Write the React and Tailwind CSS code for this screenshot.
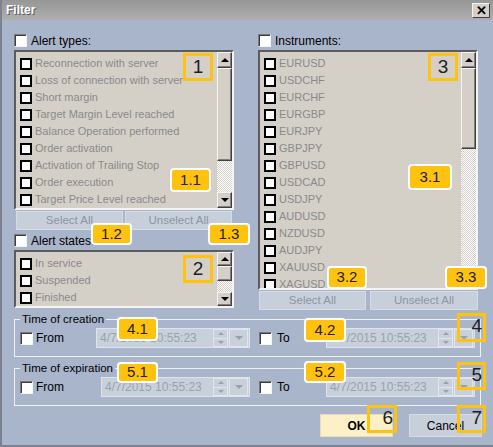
import React from "react";

const alertTypes = [
  "Reconnection with server",
  "Loss of connection with server",
  "Short margin",
  "Target Margin Level reached",
  "Balance Operation performed",
  "Order activation",
  "Activation of Trailing Stop",
  "Order execution",
  "Target Price Level reached",
];
const states = ["In service", "Suspended", "Finished"];
const instruments = [
  "EURUSD", "USDCHF", "EURCHF", "EURGBP", "EURJPY", "GBPJPY", "GBPUSD",
  "USDCAD", "USDJPY", "AUDUSD", "NZDUSD", "AUDJPY", "XAUUSD", "XAGUSD",
];

function Check3D() {
  return (
    <span className="block w-[13px] h-[13px] shrink-0 bg-white border border-t-[#7a7a7a] border-l-[#7a7a7a] border-r-[#f4f4f4] border-b-[#f4f4f4] shadow-[inset_1px_1px_0_#3c3c3c]" />
  );
}

function ListCheck() {
  return <span className="block w-[12px] h-[12px] shrink-0 border-2 border-black bg-white" />;
}

function Arrow({ down, h }) {
  return (
    <div className={`${h} w-full shrink-0 bg-[#d4d0c8] border border-t-[#f4f4f4] border-l-[#f4f4f4] border-r-[#404040] border-b-[#404040] shadow-[inset_-1px_-1px_0_#808080] flex items-center justify-center`}>
      {down ? (
        <span className="w-0 h-0 border-l-[4px] border-r-[4px] border-t-[4px] border-l-transparent border-r-transparent border-t-black" />
      ) : (
        <span className="w-0 h-0 border-l-[4px] border-r-[4px] border-b-[4px] border-l-transparent border-r-transparent border-b-black" />
      )}
    </div>
  );
}

function Scrollbar({ thumb, arrowH, down = true }) {
  return (
    <div className="w-[15px] h-full flex flex-col shrink-0">
      <Arrow h={arrowH} />
      <div className={`${thumb} shrink-0 bg-[#d4d0c8] border border-t-[#f4f4f4] border-l-[#f4f4f4] border-r-[#404040] border-b-[#404040] shadow-[inset_-1px_-1px_0_#808080]`} />
      <div className="flex-1 bg-[repeating-conic-gradient(#ffffff_0_25%,#d4d0c8_0_50%)] bg-[length:2px_2px]" />
      {down && <Arrow h={arrowH} down />}
    </div>
  );
}

function ListBox({ items, h, thumb, arrowH, down }) {
  return (
    <div className={`${h} flex bg-[#d4d0c8] border-2 border-t-[#5c5c5c] border-l-[#5c5c5c] border-r-[#f4f4f4] border-b-[#f4f4f4] overflow-hidden`}>
      <div className="flex-1 pt-[3px] pl-[4px] overflow-hidden">
        {items.map((t) => (
          <div key={t} className="h-[17px] flex items-center gap-[3px] text-[11px] text-[#8a8a8a] whitespace-nowrap">
            <ListCheck />
            <span>{t}</span>
          </div>
        ))}
      </div>
      <Scrollbar thumb={thumb} arrowH={arrowH} down={down} />
    </div>
  );
}

function FlatButton({ label, w }) {
  return (
    <div className={`${w} h-[19px] flex items-center justify-center bg-[#c7cfdb] border border-[#d6dce5] text-[11.5px] text-[#8c95a3]`}>
      {label}
    </div>
  );
}

function CheckLabel({ label }) {
  return (
    <div className="h-[13px] flex items-center gap-[4px] text-[12px] text-black">
      <Check3D />
      <span className="leading-none">{label}</span>
    </div>
  );
}

function Spin() {
  return (
    <div className="w-[15px] h-[18px] flex flex-col shrink-0 border border-[#e2e6ec]">
      <div className="flex-1 flex items-center justify-center border-b border-[#e2e6ec]">
        <span className="w-0 h-0 border-l-[3px] border-r-[3px] border-b-[3px] border-l-transparent border-r-transparent border-b-[#98a0ac]" />
      </div>
      <div className="flex-1 flex items-center justify-center">
        <span className="w-0 h-0 border-l-[3px] border-r-[3px] border-t-[3px] border-l-transparent border-r-transparent border-t-[#98a0ac]" />
      </div>
    </div>
  );
}

function Drop() {
  return (
    <div className="w-[19px] h-[18px] shrink-0 ml-[1px] flex items-center justify-center border border-[#e2e6ec]">
      <span className="w-0 h-0 border-l-[4px] border-r-[4px] border-t-[4px] border-l-transparent border-r-transparent border-t-[#98a0ac]" />
    </div>
  );
}

function DateField({ w }) {
  return (
    <div className={`${w} h-[20px] shrink-0 flex items-center bg-[#c8d0dc] border border-[#dfe4eb] pr-[1px]`}>
      <span className="flex-1 pl-[3px] text-[12px] text-[#9aa2ae] whitespace-nowrap">4/7/2015 10:55:23</span>
      <Spin />
      <Drop />
    </div>
  );
}

function Group({ title, leftW, leftDate }) {
  return (
    <fieldset className="ml-[14px] w-[467px] border border-[#eef1f6] shadow-[0_0_0_0_transparent] pb-[8px]">
      <legend className="ml-[5px] px-[2px] text-[11.5px] text-black leading-[14px]">{title}</legend>
      <div className="flex items-center mt-[2px] pl-[5px]">
        <div className={`${leftW} shrink-0 flex items-center gap-[3px] text-[12px]`}>
          <Check3D />
          <span className="leading-none">From</span>
        </div>
        <DateField w={leftDate} />
        <div className="w-[67px] ml-[9px] shrink-0 flex items-center gap-[5px] text-[12px]">
          <Check3D />
          <span className="leading-none">To</span>
        </div>
        <DateField w="w-[149px]" />
      </div>
    </fieldset>
  );
}

function Outline({ n, cls, end }) {
  return (
    <div className={`absolute ${cls} border-[3px] border-[#ffc20e] flex ${end ? "justify-end items-start pr-[1px]" : "justify-center items-center"} text-[19px] leading-[20px] text-[#1e1e1e]`}>
      {n}
    </div>
  );
}

function Badge({ n, cls }) {
  return (
    <div className={`absolute ${cls} bg-[#ffc20e] rounded-[4px] border-2 border-[#fdfdfd] shadow-[0_0_1px_#c8c8c8] flex items-center justify-center text-[15px] text-[#222]`}>
      {n}
    </div>
  );
}

export default function App() {
  return (
    <div className="relative w-[493px] h-[447px] overflow-hidden bg-[#a9b5cb] font-['Liberation_Sans',Arial,sans-serif] border-l-2 border-b-2 border-[#7c8290]">
      {/* title bar */}
      <div className="h-[20px] flex items-center justify-between pl-[4px] pr-[3px] bg-gradient-to-b from-[#979797] to-[#aeaeae]">
        <span className="text-[12px] font-bold text-white [text-shadow:1px_1px_0_#5a5a5a]">Filter</span>
        <div className="w-[18px] h-[15px] bg-[#d4d0c8] border border-t-[#f4f4f4] border-l-[#f4f4f4] border-r-[#404040] border-b-[#404040] flex items-center justify-center text-[13px] font-bold leading-none text-black">
          ✕
        </div>
      </div>

      {/* columns */}
      <div className="flex gap-[24px] pl-[12px] pt-[14px]">
        <div className="w-[220px] flex flex-col">
          <CheckLabel label="Alert types:" />
          <div className="mt-[3px]">
            <ListBox items={alertTypes} h="h-[160px]" thumb="h-[93px]" arrowH="h-[16px]" />
          </div>
          <div className="mt-[1px] flex gap-[2px] px-[2px]">
            <FlatButton label="Select All" w="w-[107px]" />
            <FlatButton label="Unselect All" w="w-[107px]" />
          </div>
          <div className="mt-[4px]">
            <CheckLabel label="Alert states:" />
          </div>
          <div className="mt-[3px]">
            <ListBox items={states} h="h-[58px]" thumb="h-[15px]" arrowH="h-[14px]" />
          </div>
        </div>
        <div className="w-[220px] flex flex-col">
          <CheckLabel label="Instruments:" />
          <div className="mt-[3px]">
            <ListBox items={instruments} h="h-[240px]" thumb="h-[81px]" arrowH="h-[16px]" down={false} />
          </div>
          <div className="mt-[1px] flex gap-[4px] pl-[1px]">
            <FlatButton label="Select All" w="w-[107px]" />
            <FlatButton label="Unselect All" w="w-[108px]" />
          </div>
        </div>
      </div>

      {/* groups */}
      <div className="mt-[2px] -ml-[2px]">
        <Group title="Time of creation" leftW="w-[76px]" leftDate="w-[154px]" />
      </div>
      <div className="mt-[4px] -ml-[2px]">
        <Group title="Time of expiration" leftW="w-[81px]" leftDate="w-[149px]" />
      </div>

      {/* bottom buttons */}
      <div className="mt-[8px] flex justify-end gap-[16px] pr-[11px]">
        <div className="w-[73px] h-[23px] flex items-center justify-center bg-[#fdf0c9] border border-[#e8dcb4] text-[12px] font-bold text-black">OK</div>
        <div className="w-[73px] h-[23px] flex items-center justify-center bg-[#c7cfdb] border border-[#d6dce5] text-[12px] text-black">Cancel</div>
      </div>

      {/* annotation callouts */}
      <Outline n="1" cls="left-[181px] top-[53px] w-[30px] h-[28px]" />
      <Outline n="2" cls="left-[181px] top-[255px] w-[30px] h-[28px]" />
      <Outline n="3" cls="left-[426px] top-[53px] w-[30px] h-[28px]" />
      <Outline n="4" cls="left-[455px] top-[313px] w-[29px] h-[29px]" end />
      <Outline n="5" cls="left-[455px] top-[362px] w-[29px] h-[28px]" end />
      <Outline n="6" cls="left-[365px] top-[405px] w-[30px] h-[28px]" end />
      <Outline n="7" cls="left-[455px] top-[405px] w-[29px] h-[28px]" end />

      <Badge n="1.1" cls="left-[168px] top-[168px] w-[41px] h-[24px]" />
      <Badge n="1.2" cls="left-[89px] top-[223px] w-[41px] h-[22px]" />
      <Badge n="1.3" cls="left-[206px] top-[223px] w-[42px] h-[22px]" />
      <Badge n="3.1" cls="left-[406px] top-[164px] w-[44px] h-[26px]" />
      <Badge n="3.2" cls="left-[325px] top-[266px] w-[40px] h-[23px]" />
      <Badge n="3.3" cls="left-[443px] top-[266px] w-[42px] h-[23px]" />
      <Badge n="4.1" cls="left-[115px] top-[317px] w-[41px] h-[24px]" />
      <Badge n="5.1" cls="left-[115px] top-[362px] w-[41px] h-[21px]" />
      <Badge n="4.2" cls="left-[302px] top-[318px] w-[42px] h-[24px]" />
      <Badge n="5.2" cls="left-[302px] top-[361px] w-[42px] h-[22px]" />
    </div>
  );
}
